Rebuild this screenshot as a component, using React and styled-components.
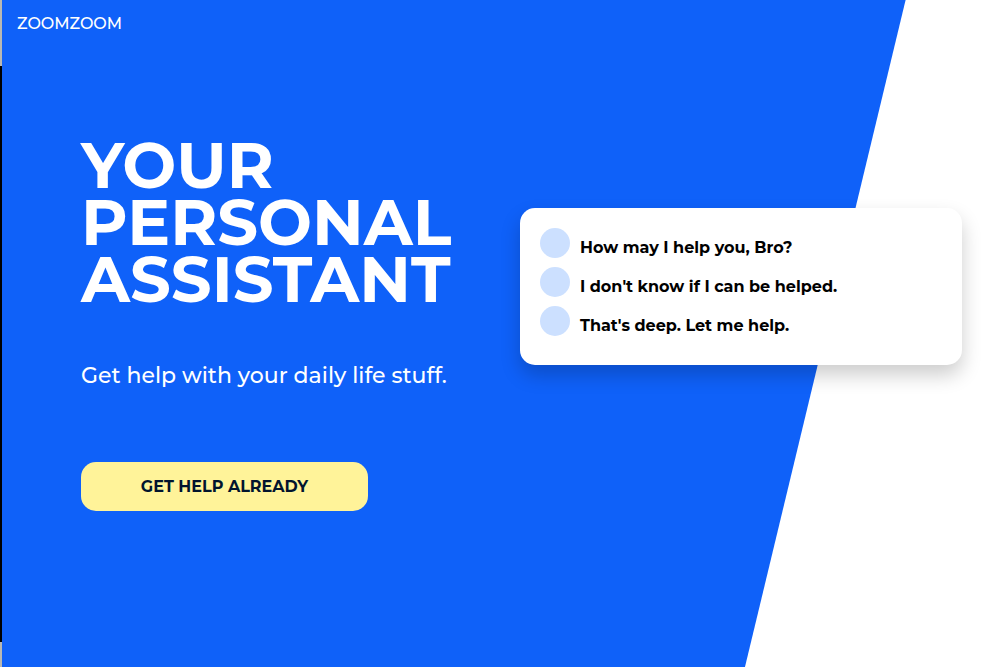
import React from "react";
import styled, { createGlobalStyle } from "styled-components";

const GlobalStyle = createGlobalStyle`
  *, *::before, *::after { box-sizing: border-box; }
  body {
    margin: 0;
    background: #fff;
    font-family: Montserrat, Inter, "Liberation Sans", sans-serif;
  }
  h1, p, ul { margin: 0; padding: 0; }
`;

const Shell = styled.div`
  display: flex;
  min-height: 100vh;
`;

const Edge = styled.div`
  flex: none;
  width: 2px;
  background: #000;
  border-top: 66px solid #b9b8b2;
  border-bottom: 25px solid #b9b8b2;
`;

const Page = styled.div`
  position: relative;
  isolation: isolate;
  flex: 1;
  min-width: 0;

  &::before {
    content: "";
    position: absolute;
    inset: 0;
    z-index: -1;
    background: #0f61f9;
    clip-path: polygon(0 0, 90% 0, 74% 100%, 0 100%);
  }
`;

const Header = styled.header`
  display: flex;
  padding: 14px 15px 12px;
`;

const Brand = styled.a`
  color: #fff;
  font-size: 16px;
  font-weight: 500;
  line-height: 20px;
  text-decoration: none;
`;

const Main = styled.main`
  display: grid;
  grid-template-columns: minmax(0, 439fr) minmax(0, 442fr);
  align-items: start;
  padding: 91px 44px 80px 79px;
`;

const Hero = styled.section`
  display: flex;
  flex-direction: column;
  align-items: flex-start;
`;

const Title = styled.h1`
  color: #fff;
  font-size: 64px;
  font-weight: 700;
  line-height: 57px;
  text-transform: uppercase;
`;

const Tagline = styled.p`
  margin-top: 52px;
  color: #fff;
  font-size: 22px;
  font-weight: 500;
  line-height: 32px;
`;

const CallToAction = styled.button`
  min-width: 287px;
  margin-top: 70px;
  padding: 14px 40px;
  border: 0;
  border-radius: 15px;
  background: #fff399;
  color: #02142e;
  font: inherit;
  font-size: 16px;
  font-weight: 700;
  line-height: 21px;
  text-transform: uppercase;
  cursor: pointer;
`;

const Chat = styled.ul`
  margin-top: 71px;
  padding: 20px;
  border-radius: 15px;
  background: #fff;
  box-shadow: 0 10px 20px rgba(0, 0, 0, 0.2);
  list-style: none;
`;

const Message = styled.li`
  display: flex;
  gap: 10px;
  color: #000;
  font-size: 16px;
  font-weight: 700;
  line-height: 39px;
`;

const Avatar = styled.span`
  flex: none;
  width: 30px;
  height: 30px;
  border-radius: 50%;
  background: #cce0ff;
`;

const messages = [
  "How may I help you, Bro?",
  "I don't know if I can be helped.",
  "That's deep. Let me help.",
];

export default function App() {
  return (
    <Shell>
      <GlobalStyle />
      <Edge />
      <Page>
        <Header>
          <Brand href="#">ZOOMZOOM</Brand>
        </Header>
        <Main>
          <Hero>
            <Title>
              Your
              <br />
              personal
              <br />
              assistant
            </Title>
            <Tagline>Get help with your daily life stuff.</Tagline>
            <CallToAction type="button">Get help already</CallToAction>
          </Hero>
          <Chat>
            {messages.map((text) => (
              <Message key={text}>
                <Avatar />
                <span>{text}</span>
              </Message>
            ))}
          </Chat>
        </Main>
      </Page>
    </Shell>
  );
}
